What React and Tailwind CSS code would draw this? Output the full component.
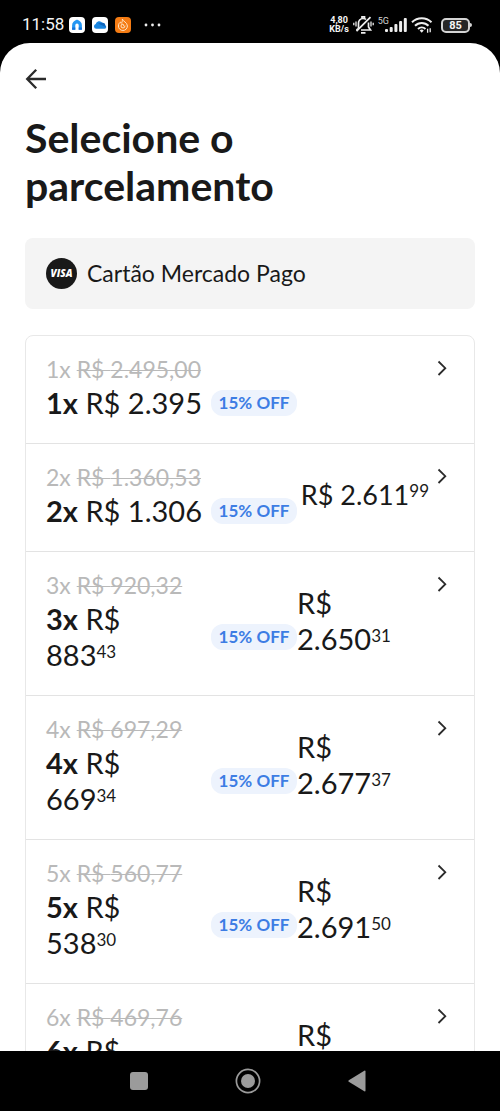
import { clsx } from "clsx";

const installments = [
  { count: 1, old: "2.495,00", value: "2.395" },
  { count: 2, old: "1.360,53", value: "1.306", total: "2.611", totalCents: "99" },
  { count: 3, old: "920,32", value: "883", cents: "43", total: "2.650", totalCents: "31", wrap: true },
  { count: 4, old: "697,29", value: "669", cents: "34", total: "2.677", totalCents: "37", wrap: true },
  { count: 5, old: "560,77", value: "538", cents: "30", total: "2.691", totalCents: "50", wrap: true },
  { count: 6, old: "469,76", value: "451", cents: "26", total: "2.707", totalCents: "56", wrap: true },
];

function HomeAppIcon() {
  return (
    <svg className="size-4" viewBox="0 0 16 16" aria-hidden="true">
      <rect width="16" height="16" rx="4" fill="#fff" />
      <path d="M4.700 12.800V8.200a3.300 3.300 0 0 1 6.600 0v4.600" fill="none" stroke="#2497f3" strokeWidth="3.200" />
      <path d="M5.500 4.500L8 2.600l2.500 1.900z" fill="#2497f3" />
      <path d="M3.100 10.500h3.200v2.300H3.100zM9.700 10.500h3.200v2.300H9.700z" fill="#1273dc" />
    </svg>
  );
}

function CloudAppIcon() {
  return (
    <svg className="size-4" viewBox="0 0 16 16" aria-hidden="true">
      <rect width="16" height="16" rx="4" fill="#fff" />
      <path d="M4.200 11.800a2.400 2.400 0 0 1-.5-4.700 3.700 3.700 0 0 1 6.600-1.300 3.100 3.100 0 0 1 3 2.800 1.700 1.700 0 0 1-.9 3.200z" fill="#1a86e0" />
      <path d="M6 6.500l4.300-.7a3.100 3.100 0 0 1 3 2.800l.4 1.400z" fill="#0f66bd" />
    </svg>
  );
}

function FlameAppIcon() {
  return (
    <svg className="size-4" viewBox="0 0 16 16" aria-hidden="true">
      <rect width="16" height="16" rx="4" fill="#f57c14" />
      <g fill="none" stroke="#ffe3c4" strokeWidth="1" strokeLinecap="round">
        <path d="M7.400 2.400c.3 1.900 5 3 5 6.600a4.500 4.500 0 0 1-9 0c0-2 1-3.200 2-4l.8 1.400c.8-.9 1.400-2.200 1.200-4z" />
        <path d="M10 9a2 2 0 1 1-2-2c0 1 .8 1.200 1 2" />
      </g>
    </svg>
  );
}

function MutedBell() {
  return (
    <svg className="h-[18px] w-[21px]" viewBox="0 0 21 18" fill="none" stroke="#eee" strokeWidth="1.700" aria-hidden="true">
      <path d="M5.500 12V7.500A4.500 4.500 0 0 1 10 2.500q2 0 3 1M15.500 6.500V11l2 3H8M3.500 14l1.500-1.500" />
      <path d="M9 2.200V.9h2.500v1.300M8 16.800h4.500" />
      <path d="M17.500 1.200l-14 14" />
      <path d="M3 5.500v5M.8 6.800v2.400M18 5.500v5M20.200 6.800v2.400" strokeWidth="1.300" />
    </svg>
  );
}

function Signal() {
  return (
    <div className="flex">
      <span className="h-4 text-[9px] leading-[9px] text-neutral-300">5G</span>
      <svg className="-ml-1 h-4 w-[22px]" viewBox="0 0 22 16" fill="#eee" aria-hidden="true">
        <rect x="0" y="12" width="3" height="3" rx="1" />
        <rect x="4.700" y="10" width="3" height="5" rx="1" />
        <rect x="9.400" y="7" width="3" height="8" rx="1" />
        <rect x="14.100" y="4" width="3" height="11" rx="1" />
        <rect x="18.800" y="1" width="3" height="14" rx="1" />
      </svg>
    </div>
  );
}

function Wifi() {
  return (
    <svg className="h-4 w-[22px]" viewBox="0 0 22 16" fill="none" stroke="#eee" strokeWidth="2" aria-hidden="true">
      <path d="M1 5.300a14 14 0 0 1 19.500 0M4 8.800a9.500 9.500 0 0 1 13.500 0M7 12a5.500 5.500 0 0 1 7.500 0" />
      <path d="M10.700 15.800l-2-2.300a3 3 0 0 1 4 0z" fill="#eee" stroke="none" />
      <path d="M16.600 11.700v4M19.200 11.200v4" strokeWidth="1.300" />
    </svg>
  );
}

function StatusBar() {
  return (
    <header className="flex h-[43px] shrink-0 items-center justify-between pt-[7px] pr-[28px] pl-[22px] font-[Roboto,sans-serif] text-neutral-100">
      <div className="flex items-center">
        <span className="w-[47px] text-[17px]">11:58</span>
        <div className="flex items-center gap-[7px]">
          <HomeAppIcon />
          <CloudAppIcon />
          <FlameAppIcon />
        </div>
        <svg className="ml-3 h-1 w-[18px]" viewBox="0 0 18 4" fill="#eee" aria-hidden="true">
          <circle cx="3" cy="2" r="1.400" />
          <circle cx="9.500" cy="2" r="1.400" />
          <circle cx="16" cy="2" r="1.400" />
        </svg>
      </div>
      <div className="flex items-center gap-1">
        <span className="text-center text-[9px] leading-[9px] font-bold">
          4,80
          <br />
          KB/s
        </span>
        <MutedBell />
        <Signal />
        <Wifi />
        <div className="ml-1 flex items-center">
          <span className="flex h-[15px] w-[29px] items-center justify-center rounded-[5px] border-2 border-neutral-300 bg-neutral-800 text-[11px] leading-none font-bold">
            85
          </span>
          <span className="h-1 w-[2px] rounded-r bg-neutral-300" />
        </div>
      </div>
    </header>
  );
}

function Cents({ children }) {
  return <span className="relative -top-2 text-[17px] leading-none">{children}</span>;
}

function Installment({ item }) {
  return (
    <li className="border-b border-[#e3e3e3] last:border-b-0">
      <button className="flex w-full cursor-pointer pt-[17px] pr-[27px] pb-[22px] pl-5 text-left">
        <div className="flex-1">
          <p className="text-[23px] leading-8 text-[#b9b9b9]">
            {item.count}x <s className="decoration-1">R$ {item.old}</s>
          </p>
          <div className="flex items-center justify-between">
            <p className="text-[29px] leading-9 whitespace-nowrap">
              <b className="font-bold">{item.count}x</b> R${item.wrap ? <br /> : " "}
              {item.value}
              {item.cents && <Cents>{item.cents}</Cents>}
            </p>
            <span className="w-[86px] shrink-0 rounded-xl bg-[#edf3fd] text-center text-[17px] leading-[26px] font-bold whitespace-nowrap text-[#3d7de4]">
              15% OFF
            </span>
          </div>
        </div>
        <div
          className={clsx(
            "w-[132px] shrink-0 self-center leading-9 whitespace-nowrap",
            item.wrap ? "text-[29px]" : "text-right text-[27px]"
          )}
        >
          {item.total && (
            <p>
              R${item.wrap ? <br /> : " "}
              {item.total}
              <Cents>{item.totalCents}</Cents>
            </p>
          )}
        </div>
        <svg className="mt-[7px] ml-2 h-4 w-[10px] shrink-0" viewBox="0 0 10 16" fill="none" stroke="#2b2b2b" strokeWidth="1.800" aria-hidden="true">
          <path d="M1.500 1.500L8.300 8.200 1.500 15" />
        </svg>
      </button>
    </li>
  );
}

function NavBar() {
  return (
    <nav className="flex h-[60px] shrink-0 items-center justify-center pr-1">
      <button aria-label="Recentes" className="flex w-[109px] justify-center">
        <span className="size-[18px] rounded-[3px] bg-[#9b9b9b]" />
      </button>
      <button aria-label="Início" className="flex w-[109px] justify-center">
        <svg className="size-[26px]" viewBox="0 0 26 26" aria-hidden="true">
          <circle cx="13" cy="13" r="11.600" fill="none" stroke="#9b9b9b" strokeWidth="1.700" />
          <circle cx="13" cy="13" r="7" fill="#9b9b9b" />
        </svg>
      </button>
      <button aria-label="Voltar" className="flex w-[109px] justify-center">
        <svg className="h-[22px] w-[18px]" viewBox="0 0 18 22" fill="#9b9b9b" aria-hidden="true">
          <path d="M.8 10.200L16.300.7q1.200-.5 1.200.8v19q0 1.300-1.200.8L.8 11.800q-1-.8 0-1.600z" />
        </svg>
      </button>
    </nav>
  );
}

export default function App() {
  return (
    <div className="flex h-screen flex-col bg-black">
      <StatusBar />
      <main className="min-h-0 flex-1 overflow-hidden rounded-t-[30px] bg-white px-[25px] font-[Lato,sans-serif] text-[#191919]">
        <button aria-label="Voltar" className="mt-[25px] block">
          <svg className="h-[22px] w-[22px]" viewBox="0 0 22 22" fill="none" stroke="#2b2b2b" strokeWidth="2.300" aria-hidden="true">
            <path d="M11.200 1.800L2.200 11l9 9.200M2.200 11H21" />
          </svg>
        </button>
        <h1 className="mt-6 text-[41px] leading-[48px] font-bold">
          Selecione o<br />
          parcelamento
        </h1>
        <div className="mt-7 flex h-[71px] items-center gap-[10px] rounded-lg bg-[#f4f4f4] px-[21px]">
          <span className="flex size-[31px] items-center justify-center rounded-full bg-[#191919] font-['Open_Sans',sans-serif] text-[10px] font-extrabold text-white italic">
            VISA
          </span>
          <span className="text-[23px]">Cartão Mercado Pago</span>
        </div>
        <ul className="mt-[26px] rounded-lg border border-[#e8e8e8]">
          {installments.map((item) => (
            <Installment key={item.count} item={item} />
          ))}
        </ul>
      </main>
      <NavBar />
    </div>
  );
}
